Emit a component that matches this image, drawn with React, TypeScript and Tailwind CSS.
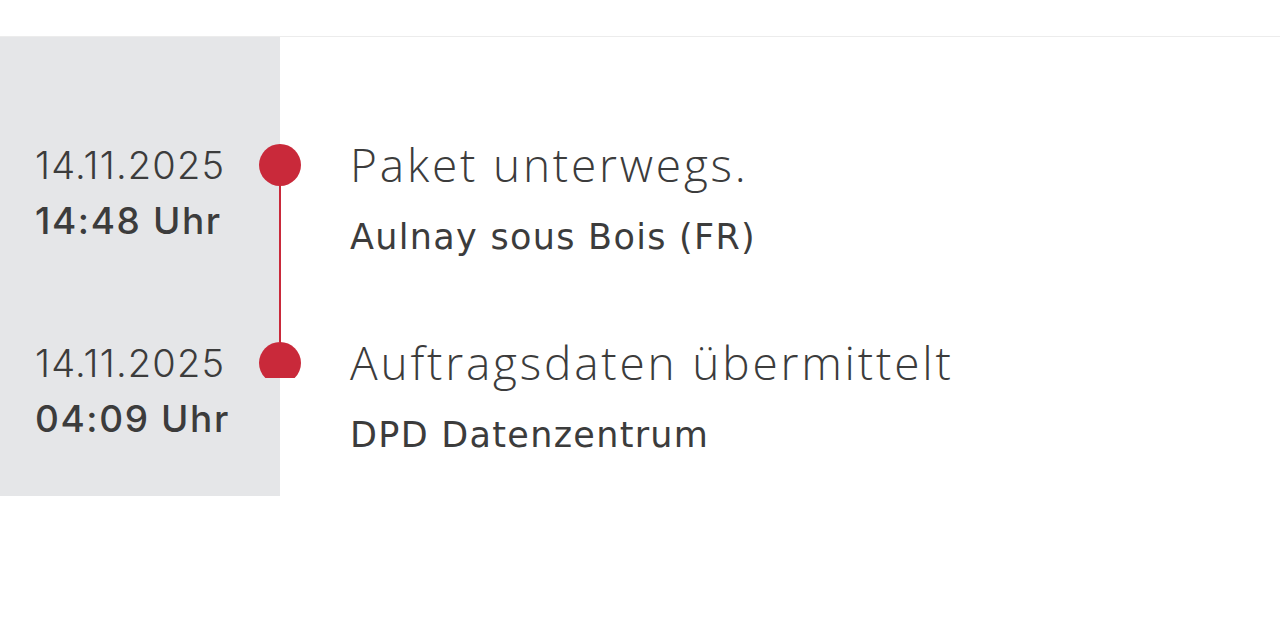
import React from "react";

const Dot = ({ clip }: { clip?: boolean }) => (
  <div className={`absolute right-[-21px] top-0 w-[42px] ${clip ? "h-[36px]" : "h-[42px]"} overflow-hidden`}>
    <div className="w-[42px] h-[42px] rounded-full bg-[#c9293a]" />
  </div>
);

export default function App() {
  const left = "font-['Inter',sans-serif] text-[#3c3c3c]";
  const right = "font-['Open_Sans',sans-serif] text-[#3c3c3c]";
  const sub = "font-['DejaVu_Sans',sans-serif] text-[#3c3c3c]";
  return (
    <div className="w-[1280px] h-[631px] bg-white overflow-hidden">
      <div className="h-[37px] border-b border-[#ececec]" />
      <div className="flex flex-col">
        <div className="flex h-[107px]">
          <div className="w-[280px] bg-[#e5e6e8]" />
        </div>
        <div className="flex h-[198px]">
          <div className="w-[280px] bg-[#e5e6e8] relative pl-[35px]">
            <div className="absolute right-[-1px] top-[21px] bottom-[-21px] w-[2px] bg-[#c9293a]" />
            <Dot />
            <div className={`${left} text-[38px] leading-[56px] font-light tracking-[1.2px] mt-[-7px]`}>14.11.2025</div>
            <div className={`${left} text-[37px] leading-[56px] font-medium tracking-[1.6px]`}>14:48 Uhr</div>
          </div>
          <div className="pl-[70px]">
            <div className={`${right} text-[46px] leading-[56px] font-light tracking-[2.8px] mt-[-8px]`}>Paket unterwegs.</div>
            <div className={`${sub} text-[35px] leading-[56px] tracking-[1.3px] mt-[17px]`}>Aulnay sous Bois (FR)</div>
          </div>
        </div>
        <div className="flex h-[154px]">
          <div className="w-[280px] bg-[#e5e6e8] relative pl-[35px]">
            <Dot clip />
            <div className={`${left} text-[38px] leading-[56px] font-light tracking-[1.2px] mt-[-7px]`}>14.11.2025</div>
            <div className={`${left} text-[37px] leading-[56px] font-medium tracking-[1.6px]`}>04:09 Uhr</div>
          </div>
          <div className="pl-[70px]">
            <div className={`${right} text-[46px] leading-[56px] font-light tracking-[2.8px] mt-[-8px]`}>Auftragsdaten übermittelt</div>
            <div className={`${sub} text-[35px] leading-[56px] tracking-[1.3px] mt-[17px]`}>DPD Datenzentrum</div>
          </div>
        </div>
      </div>
    </div>
  );
}
